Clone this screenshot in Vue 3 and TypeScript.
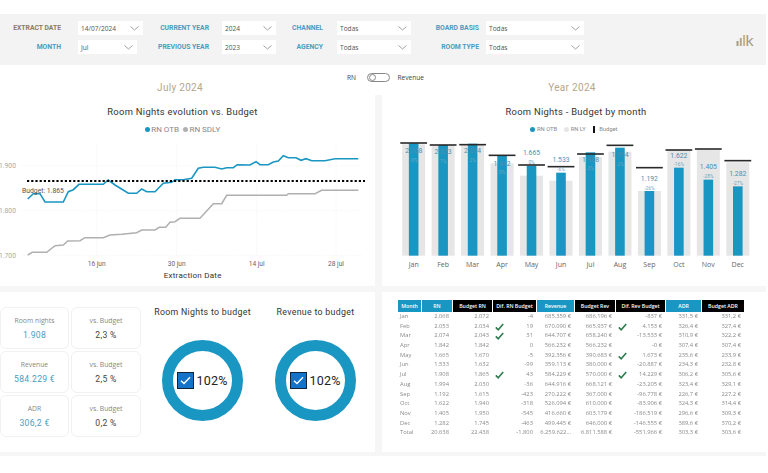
<script setup lang="ts">
interface FilterRow { label: string; value: string; size: string; gold?: boolean }
interface FilterGroup { cls: string; rows: FilterRow[] }

const groups: FilterGroup[] = [
  { cls: 'g1', rows: [
    { label: 'EXTRACT DATE', value: '14/07/2024', size: 'full', gold: true },
    { label: 'MONTH', value: 'Jul', size: 'short' },
  ] },
  { cls: 'g2', rows: [
    { label: 'CURRENT YEAR', value: '2024', size: 'full' },
    { label: 'PREVIOUS YEAR', value: '2023', size: 'full' },
  ] },
  { cls: 'g3', rows: [
    { label: 'CHANNEL', value: 'Todas', size: 'full' },
    { label: 'AGENCY', value: 'Todas', size: 'full' },
  ] },
  { cls: 'g4', rows: [
    { label: 'BOARD BASIS', value: 'Todas', size: 'full' },
    { label: 'ROOM TYPE', value: 'Todas', size: 'full' },
  ] },
]

// Coordinates below were read from the reference at 3x; divided back here.
const toPts = (raw: number[][]): string => raw.map(([x, y]) => `${(x / 3).toFixed(1)},${(y / 3).toFixed(1)}`).join(' ')

const blueLine = toPts([[83,312],[100,296],[120,296],[135,321],[190,321],[205,290],[220,284],[237,268],[310,268],[325,255],[345,270],[385,295],[410,295],[425,282],[440,290],[465,290],[490,265],[515,262],[525,254],[550,254],[575,250],[595,220],[610,217],[645,217],[665,222],[680,218],[700,218],[712,209],[750,210],[768,200],[780,209],[805,209],[820,201],[835,198],[850,182],[865,188],[888,188],[903,196],[918,191],[935,197],[975,197],[1005,191],[1075,191]])
const grayLine = toPts([[83,480],[97,472],[140,472],[165,452],[190,450],[203,438],[240,437],[255,428],[310,428],[330,420],[365,418],[410,413],[425,405],[465,405],[478,397],[497,397],[510,382],[525,380],[540,370],[600,370],[640,326],[665,326],[680,301],[860,301],[865,296],[945,296],[965,286],[1075,286]])

const yTicks = [{ t: '1.900', y: 70.7 }, { t: '1.800', y: 115.7 }, { t: '1.700', y: 160.3 }]
const xTicks = [{ t: '16 jun', x: 96.7 }, { t: '30 jun', x: 176.7 }, { t: '14 jul', x: 256.7 }, { t: '28 jul', x: 336 }]

const base = 482 / 3
const bars = [
  ['Jan', 145, 148, 144, '2.068', 167, '-0%', 195],
  ['Feb', 150, 153, 150, '2.053', 170, '1%', 198],
  ['Mar', 146, 150, 149, '2.074', 168, '2%', 195],
  ['Apr', 182, 205, 181, '1.842', 205, '0%', 232],
  ['May', 212, 242, 210, '1.665', 173, '0%', 202],
  ['Jun', 233, 257, 215, '1.533', 194, '-6%', 224],
  ['Jul', 172, 186, 177, '1.908', 193, '2%', 221],
  ['Aug', 158, 170, 151, '1.994', 180, '-2%', 208],
  ['Sep', 288, 288, 218, '1.192', 250, '-26%', 280],
  ['Oct', 218, 165, 165, '1.622', 181, '-16%', 208],
  ['Nov', 254, 165, 162, '1.405', 215, '-28%', 244],
  ['Dec', 274, 202, 197, '1.282', 236, '-27%', 265],
].map((b, i) => ({
  m: b[0] as string,
  x: (89 + 88.4 * i) / 3,
  blue: (b[1] as number) / 3,
  gray: (b[2] as number) / 3,
  budget: (b[3] as number) / 3,
  val: b[4] as string,
  valY: (b[5] as number) / 3,
  pct: b[6] as string,
  pctY: (b[7] as number) / 3,
}))

const kpis = [
  { title: 'Room nights', value: '1.908', vs: '2,3 %' },
  { title: 'Revenue', value: '584.229 €', vs: '2,5 %' },
  { title: 'ADR', value: '306,2 €', vs: '0,2 %' },
]

const donuts = ['Room Nights to budget', 'Revenue to budget']

const headers = [
  { t: 'Month', blue: true }, { t: 'RN', blue: true }, { t: 'Budget RN' }, { t: 'Dif. RN Budget' },
  { t: 'Revenue', blue: true }, { t: 'Budget Rev' }, { t: 'Dif. Rev Budget' }, { t: 'ADR', blue: true }, { t: 'Budget ADR' },
]
const rows = [
  { c: ['Jan','2.068','2.072','-4','685.359 €','686.196 €','-837 €','331,5 €','331,2 €'] },
  { c: ['Feb','2.053','2.034','19','670.090 €','665.937 €','4.153 €','326,4 €','327,4 €'], rn: true, rev: true },
  { c: ['Mar','2.074','2.043','31','644.707 €','658.240 €','-13.533 €','310,9 €','322,2 €'], rn: true },
  { c: ['Apr','1.842','1.842','0','566.232 €','566.232 €','-0 €','307,4 €','307,4 €'] },
  { c: ['May','1.665','1.670','-5','392.356 €','390.683 €','1.673 €','235,6 €','233,9 €'], rev: true },
  { c: ['Jun','1.533','1.632','-99','359.113 €','380.000 €','-20.887 €','234,3 €','232,8 €'] },
  { c: ['Jul','1.908','1.865','43','584.229 €','570.000 €','14.229 €','306,2 €','305,6 €'], rn: true, rev: true },
  { c: ['Aug','1.994','2.030','-36','644.916 €','668.121 €','-23.205 €','323,4 €','329,1 €'] },
  { c: ['Sep','1.192','1.615','-423','270.222 €','367.000 €','-96.778 €','226,7 €','227,2 €'] },
  { c: ['Oct','1.622','1.940','-318','526.094 €','610.000 €','-83.906 €','324,3 €','314,4 €'] },
  { c: ['Nov','1.405','1.950','-545','416.660 €','603.179 €','-186.519 €','296,6 €','309,3 €'] },
  { c: ['Dec','1.282','1.745','-463','499.445 €','646.000 €','-146.555 €','389,6 €','370,2 €'] },
  { c: ['Total','20.638','22.438','-1.800','6.259.622...','6.811.588 €','-551.966 €','303,3 €','303,6 €'] },
]
</script>

<template>
  <div class="page">
    <header class="filters">
      <div v-for="g in groups" :key="g.cls" class="group" :class="g.cls">
        <template v-for="r in g.rows" :key="r.label">
          <span class="flabel" :class="{ gold: r.gold }">{{ r.label }}</span>
          <div class="select" :class="r.size">
            <span>{{ r.value }}</span>
            <svg width="9" height="5" viewBox="0 0 9 5"><polyline points="0.5,0.5 4.5,4 8.5,0.5" fill="none" stroke="#8a8a8a" stroke-width="0.8" /></svg>
          </div>
        </template>
      </div>
      <svg class="logo" width="22" height="18" viewBox="0 0 22 18">
        <rect x="0.5" y="11" width="2" height="5" fill="#a99a7c" />
        <rect x="3.8" y="8" width="2" height="8" fill="#b5a78c" />
        <rect x="7.1" y="5" width="2" height="11" fill="#c1b49b" />
        <text x="9.6" y="16" class="logo-k">k</text>
      </svg>
    </header>

    <div class="heads">
      <div class="year left">July 2024</div>
      <div class="toggle">
        <span>RN</span>
        <i class="switch"><b></b></i>
        <span>Revenue</span>
      </div>
      <div class="year right">Year 2024</div>
    </div>

    <main class="board">
      <section class="panel line-panel">
        <h2 class="title">Room Nights evolution vs. Budget</h2>
        <div class="legend">
          <span class="lg"><i class="dot blue"></i>RN OTB</span>
          <span class="lg"><i class="dot grey"></i>RN SDLY</span>
        </div>
        <svg class="chart" width="375" height="151" viewBox="0 40 375 151">
          <line v-for="t in yTicks" :key="t.t" x1="22" :y1="t.y" x2="363" :y2="t.y" class="grid" />
          <line v-for="t in xTicks" :key="t.t" :x1="t.x" y1="50" :x2="t.x" y2="161" class="grid" />
          <text v-for="t in yTicks" :key="t.t" x="16" :y="t.y + 2.5" text-anchor="end" class="ytick">{{ t.t }}</text>
          <text v-for="t in xTicks" :key="t.t" :x="t.x" y="170.5" text-anchor="middle" class="xtick">{{ t.t }}</text>
          <polyline :points="grayLine" fill="none" stroke="#b0b0b0" stroke-width="1.5" />
          <polyline :points="blueLine" fill="none" stroke="#1a96c2" stroke-width="1.6" />
          <line x1="27" y1="86" x2="365" y2="86" stroke="#000" stroke-width="2" stroke-dasharray="2.2 2" />
          <text x="22" y="98" class="budget-label">Budget: 1.865</text>
          <text x="192.7" y="183" text-anchor="middle" class="xtitle">Extraction Date</text>
        </svg>
      </section>

      <section class="panel bars-panel">
        <h2 class="title">Room Nights - Budget by month</h2>
        <div class="legend small">
          <span class="lg"><i class="dot blue"></i>RN OTB</span>
          <span class="lg"><i class="dot light"></i>RN LY</span>
          <span class="lg"><i class="tick"></i>Budget</span>
        </div>
        <svg class="chart" width="384" height="151" viewBox="-2 40 384 151">
          <g v-for="b in bars" :key="b.m">
            <rect :x="b.x - 11.5" :y="b.gray" width="23" :height="base - b.gray" fill="#e6e6e6" />
            <rect :x="b.x - 4.8" :y="b.blue" width="9.6" :height="base - b.blue" fill="#1a96c2" />
            <rect :x="b.x - 13.4" :y="b.budget - 0.8" width="26.8" height="1.6" fill="#2a2a2a" />
            <text :x="b.x" :y="b.valY + 2.4" text-anchor="middle" class="bar-val">{{ b.val }}</text>
            <text :x="b.x" :y="b.pctY + 1.8" text-anchor="middle" class="bar-pct">{{ b.pct }}</text>
            <text :x="b.x" y="172" text-anchor="middle" class="bar-month">{{ b.m }}</text>
          </g>
        </svg>
      </section>

      <section class="panel kpi-panel">
        <div class="cards">
          <template v-for="k in kpis" :key="k.title">
            <div class="card">
              <span class="ctitle">{{ k.title }}</span>
              <span class="cvalue">{{ k.value }}</span>
            </div>
            <div class="card">
              <span class="ctitle">vs. Budget</span>
              <span class="cvs">{{ k.vs }}</span>
            </div>
          </template>
        </div>
        <div v-for="d in donuts" :key="d" class="gauge">
          <h3 class="gtitle">{{ d }}</h3>
          <div class="donut">
            <svg width="17" height="17" viewBox="0 0 17 17">
              <rect x="0.5" y="0.5" width="16" height="16" fill="#1273c9" stroke="#10243a" />
              <polyline points="4,8.8 7,11.6 13,5.2" fill="none" stroke="#fff" stroke-width="1.4" />
            </svg>
            <span>102%</span>
          </div>
        </div>
      </section>

      <section class="panel table-panel">
        <table class="tbl">
          <colgroup>
            <col class="c1" /><col class="c2" /><col class="c3" /><col class="c4" /><col class="c5" /><col class="c6" /><col class="c7" /><col class="c8" /><col class="c9" />
          </colgroup>
          <thead>
            <tr>
              <th v-for="h in headers" :key="h.t" :class="{ hblue: h.blue }">{{ h.t }}</th>
            </tr>
          </thead>
          <tbody>
            <tr v-for="r in rows" :key="r.c[0]">
              <td v-for="(v, i) in r.c" :key="i" :class="{ first: i === 0 }">
                <div class="cell">
                  <svg v-if="(i === 3 && r.rn) || (i === 6 && r.rev)" class="ok" width="9" height="8" viewBox="0 0 9 8"><polyline points="0.8,4.4 3.2,6.8 8.2,1" fill="none" stroke="#2f7a4f" stroke-width="1.6" /></svg>
                  <span class="num">{{ v }}</span>
                </div>
              </td>
            </tr>
          </tbody>
        </table>
      </section>
    </main>
  </div>
</template>

<style>
html, body { background: #fff; }
</style>

<style scoped>
.page {
  width: 766px;
  padding-top: 14px;
  font-family: "Open Sans", "Noto Sans", sans-serif;
  color: #555;
  filter: blur(0.4px);
}
.filters {
  height: 51px;
  box-sizing: border-box;
  background: #f3f3f3;
  display: flex;
  align-items: flex-start;
  padding-top: 7px;
  position: relative;
}
.group {
  display: grid;
  row-gap: 5px;
  grid-auto-rows: 14px;
  align-items: center;
}
.g1 { grid-template-columns: 61px 65px; column-gap: 17px; }
.g2 { grid-template-columns: 66px 54px; column-gap: 13px; }
.g3 { grid-template-columns: 47px 74px; column-gap: 14px; }
.g4 { grid-template-columns: 68px 98px; column-gap: 7px; }
.flabel {
  font-family: "Roboto", sans-serif;
  font-size: 6.8px;
  font-weight: 700;
  color: #4a9cc0;
  text-align: right;
  white-space: nowrap;
}
.flabel.gold { color: #8a7c5e; }
.select {
  background: #fff;
  height: 14px;
  display: flex;
  align-items: center;
  justify-content: space-between;
  padding: 0 4px 0 3px;
  box-sizing: border-box;
  font-size: 6.6px;
  color: #555;
}
.select.short { width: 59px; }
.logo { position: absolute; left: 736px; top: 16px; }
.logo-k { font-family: "Lato", sans-serif; font-size: 16px; fill: #a99a7c; }

.heads {
  display: grid;
  grid-template-columns: 347px 77px 342px;
  height: 30px;
  background: #fff;
}
.year {
  font-family: "Roboto", sans-serif;
  font-size: 10px;
  letter-spacing: 0.3px;
  color: #b5a68e;
  text-align: center;
  padding-top: 16px;
  line-height: 13px;
}
.year.left { padding-left: 13px; }
.year.right { padding-right: 46px; }
.toggle {
  display: flex;
  align-items: center;
  justify-content: space-between;
  height: 10px;
  margin-top: 7px;
  font-size: 6.6px;
  color: #444;
}
.switch {
  width: 23px;
  height: 9px;
  border: 1px solid #888;
  border-radius: 6px;
  box-sizing: border-box;
  display: flex;
  align-items: center;
  padding-left: 1px;
  margin: 0 1px 0 4px;
}
.switch b { width: 5px; height: 5px; border: 1px solid #888; border-radius: 50%; background: #fff; }

.board {
  display: grid;
  grid-template-columns: 375px 384px;
  grid-template-rows: 191px 160px;
  column-gap: 7px;
  row-gap: 6px;
  background: #f6f6f6;
  padding-bottom: 4px;
}
.panel { background: #fff; min-width: 0; }
.line-panel, .bars-panel {
  padding-top: 10px;
  box-sizing: border-box;
  display: flex;
  flex-direction: column;
}
.line-panel .title, .line-panel .legend { padding-right: 10px; }
.title {
  margin: 0;
  font-family: "Roboto", sans-serif;
  font-size: 9.4px;
  font-weight: 400;
  line-height: 14px;
  letter-spacing: 0.3px;
  color: #333;
  text-align: center;
}
.bars-panel .title { font-size: 9.4px; padding-left: 4px; }
.legend {
  margin-top: 4px;
  height: 12px;
  display: flex;
  justify-content: center;
  align-items: center;
  gap: 4px;
  font-family: "Roboto", sans-serif;
  font-size: 8px;
  color: #888;
}
.legend.small { font-size: 5.8px; gap: 7px; }
.lg { display: inline-flex; align-items: center; gap: 1.5px; }
.dot { width: 5px; height: 5px; border-radius: 50%; display: inline-block; }
.dot.blue { background: #1a96c2; }
.dot.grey { background: #b0b0b0; }
.dot.light { background: #e6e6e6; }
.tick { width: 2px; height: 7px; background: #111; display: inline-block; margin-right: 3px; }
.chart { display: block; flex: none; }
.grid { stroke: #e9e9e9; stroke-width: 0.6; stroke-dasharray: 0.8 1.4; }
.ytick { font-family: "Roboto", sans-serif; font-size: 6.8px; fill: #aaa; }
.xtick { font-family: "Roboto", sans-serif; font-size: 6.6px; fill: #666; }
.budget-label { font-family: "Roboto", sans-serif; font-size: 6.8px; fill: #555; }
.xtitle { font-family: "Roboto", sans-serif; font-size: 8px; font-weight: 400; letter-spacing: 0.25px; fill: #333; }
.bar-val { font-family: "Roboto", sans-serif; font-size: 6.8px; font-weight: 400; fill: #4a8fb0; }
.bar-pct { font-family: "Roboto", sans-serif; font-size: 4.8px; fill: #6aa6c2; }
.bar-month { font-family: "Open Sans", sans-serif; font-size: 7px; fill: #666; }

.kpi-panel {
  display: flex;
  align-items: flex-start;
  padding-top: 13px;
  box-sizing: border-box;
}
.cards {
  display: grid;
  grid-template-columns: 69px 70px;
  grid-auto-rows: 42px;
  gap: 2px;
  margin-top: 2px;
  margin-right: 5px;
}
.card {
  border: 1px solid #f1f1f1;
  border-radius: 6px;
  display: flex;
  flex-direction: column;
  align-items: center;
  justify-content: center;
  gap: 5px;
  box-sizing: border-box;
}
.ctitle { font-size: 6.8px; color: #888; line-height: 9px; }
.cvalue { font-family: "Roboto", sans-serif; font-size: 8.6px; letter-spacing: 0.3px; color: #4a9cc0; line-height: 11px; }
.cvs { font-family: "Roboto", sans-serif; font-size: 8.6px; letter-spacing: 0.3px; color: #444; line-height: 11px; }
.gauge {
  width: 113px;
  display: flex;
  flex-direction: column;
  align-items: center;
}
.gtitle {
  margin: 0;
  font-family: "Roboto", sans-serif;
  font-size: 8.8px;
  font-weight: 400;
  line-height: 14px;
  letter-spacing: 0.3px;
  color: #333;
  white-space: nowrap;
}
.donut {
  margin-top: 21px;
  width: 81px;
  height: 81px;
  box-sizing: border-box;
  border: 11.5px solid #1a96c2;
  border-radius: 50%;
  display: flex;
  align-items: center;
  justify-content: center;
  gap: 2px;
  font-family: "Roboto", sans-serif;
  font-size: 12.5px;
  letter-spacing: 0.2px;
  color: #222;
}
.donut svg { flex: none; }

.table-panel { padding: 8px 0 0 15px; box-sizing: border-box; }
.tbl {
  table-layout: fixed;
  border-collapse: separate;
  border-spacing: 0;
  width: 347px;
  font-size: 5.8px;
  color: #8a8a8a;
  filter: blur(0.35px);
  position: relative;
  top: 0;
}
.c1 { width: 24px; }
.c2 { width: 31px; }
.c3 { width: 40px; }
.c4 { width: 44px; }
.c5 { width: 38px; }
.c6 { width: 41px; }
.c7 { width: 50px; }
.c8 { width: 36px; }
.c9 { width: 43px; }
th {
  background: #000;
  color: #fff;
  height: 12px;
  padding: 0;
  font-size: 5.2px;
  font-weight: 600;
  border-left: 1px solid #fff;
  white-space: nowrap;
  overflow: hidden;
}
th.hblue { background: #1a96c2; }
td { height: 9.7px; padding: 0 3px 0 0; }
.cell { display: flex; align-items: center; justify-content: flex-end; height: 9.7px; white-space: nowrap; }
.ok { margin-right: auto; margin-left: 3px; }
.first .cell { justify-content: flex-start; padding-left: 3px; }
.num { line-height: 9.7px; }
</style>
